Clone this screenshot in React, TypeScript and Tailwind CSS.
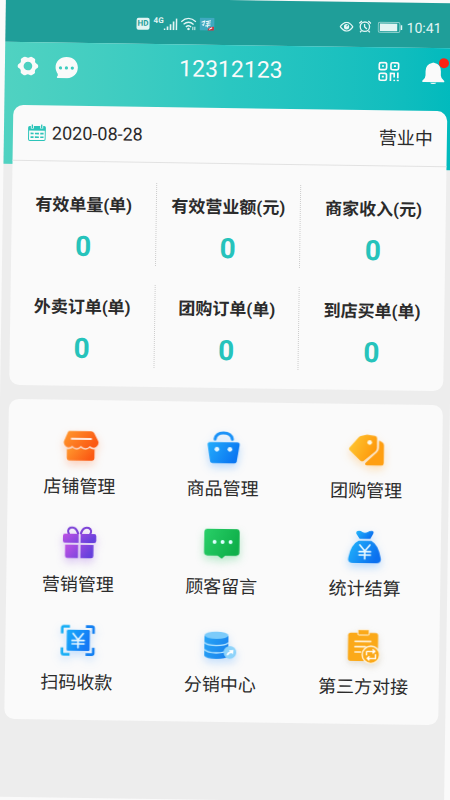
import React from 'react'

const stats = [
  { label: '有效单量(单)', value: 0 },
  { label: '有效营业额(元)', value: 0 },
  { label: '商家收入(元)', value: 0 },
  { label: '外卖订单(单)', value: 0 },
  { label: '团购订单(单)', value: 0 },
  { label: '到店买单(单)', value: 0 },
]

function Gradient({ id, from, to }: { id: string; from: string; to: string }) {
  return (
    <linearGradient id={id} x1="0" y1="0" x2="1" y2="0.4">
      <stop offset="0" stopColor={from} />
      <stop offset="1" stopColor={to} />
    </linearGradient>
  )
}

function ShopIcon() {
  return (
    <svg viewBox="0 0 120 120" className="size-10 drop-shadow-[0_4px_4px_rgba(255,110,40,0.3)]" aria-hidden="true">
      <Gradient id="shop" from="#ff9a2e" to="#fb5a14" />
      <path d="M24 16H92Q98 16 101 21L113 44Q118 54 108 62Q99 69 89 60Q77 74 62 60Q48 74 36 60Q26 69 17 62Q7 54 12 44L22 20Q23 16 28 16Z" fill="url(#shop)" />
      <path d="M20 70Q30 71 37 66Q49 76 62 66Q76 76 88 66Q95 71 103 70V97Q103 104 96 104H27Q20 104 20 97Z" fill="url(#shop)" />
      <path d="M34 39H92" stroke="#ffe9dc" strokeWidth="6" strokeLinecap="round" />
    </svg>
  )
}

function BasketIcon() {
  return (
    <svg viewBox="0 0 120 120" className="size-10 drop-shadow-[0_4px_4px_rgba(30,140,255,0.3)]" aria-hidden="true">
      <Gradient id="basket" from="#24adfb" to="#0b77f2" />
      <path d="M35 34Q38 15 60 15Q84 15 87 34" fill="none" stroke="#1a92f8" strokeWidth="9" strokeLinecap="round" />
      <path d="M20 43H102Q110 43 109 51L101 100Q100 106 94 106H29Q22 106 21 100L13 51Q12 43 20 43Z" fill="url(#basket)" />
      <circle cx="41" cy="64" r="7" fill="#e6f7ff" />
      <circle cx="80" cy="64" r="7" fill="#e6f7ff" />
    </svg>
  )
}

function TagsIcon() {
  return (
    <svg viewBox="0 0 120 120" className="size-10 drop-shadow-[0_4px_4px_rgba(255,160,30,0.3)]" aria-hidden="true">
      <Gradient id="tags" from="#fecb36" to="#fe9a0c" />
      <path d="M98 31L108 36Q113 39 113 45V99Q113 106 106 106H62Q53 104 60 97L92 67Q98 61 98 54Z" fill="#ff9f12" />
      <path d="M9 54L37 22Q40 18 46 17L59 14Q62 13 66 14L86 17Q92 18 92 24V53Q92 59 88 63L53 92Q48 96 43 92L10 61Q7 58 9 54Z" fill="url(#tags)" />
      <circle cx="70" cy="37" r="7" fill="#fff8e4" />
    </svg>
  )
}

function GiftIcon() {
  return (
    <svg viewBox="0 0 120 120" className="size-10 drop-shadow-[0_4px_4px_rgba(140,70,220,0.3)]" aria-hidden="true">
      <Gradient id="gift" from="#bf52e4" to="#6740dc" />
      <path d="M58 31C53 12 42 9 34 12C26 16 25 25 31 31M65 31C70 12 81 9 89 12C98 16 98 25 93 31" fill="none" stroke="#7c42d6" strokeWidth="6" />
      <path d="M18 30H59V57H18Q12 57 12 51V36Q12 30 18 30ZM65 30H106Q112 30 112 36V51Q112 57 106 57H65Z" fill="url(#gift)" />
      <path d="M19 63H58V103H26Q19 103 19 96ZM65 63H104V96Q104 103 97 103H65Z" fill="url(#gift)" />
    </svg>
  )
}

function MessageIcon() {
  return (
    <svg viewBox="0 0 120 120" className="size-10 drop-shadow-[0_4px_4px_rgba(30,190,90,0.3)]" aria-hidden="true">
      <Gradient id="message" from="#29cf68" to="#0fb04a" />
      <path d="M17 9H103Q113 9 113 19V79Q113 89 103 89H70L62 97Q60 99 58 97L48 89H17Q7 89 7 79V19Q7 9 17 9Z" fill="url(#message)" />
      <circle cx="38" cy="48" r="6" fill="#dff" />
      <circle cx="62" cy="48" r="6" fill="#dff" />
      <circle cx="86" cy="48" r="6" fill="#dff" />
    </svg>
  )
}

function MoneyBagIcon() {
  return (
    <svg viewBox="0 0 120 120" className="size-10 drop-shadow-[0_4px_4px_rgba(30,140,255,0.3)]" aria-hidden="true">
      <Gradient id="bag" from="#22b6fb" to="#0b70ef" />
      <path d="M44 32L34 17Q32 8 42 8Q48 8 52 12Q60 17 68 12Q73 8 80 8Q89 9 84 18L76 32Z" fill="url(#bag)" />
      <path d="M41 38H79Q100 48 108 89Q111 105 96 105H24Q8 105 11 89Q19 48 41 38Z" fill="url(#bag)" />
      <path d="M45 51L60 69L75 51M60 69V92M43 71H77M43 81H77" fill="none" stroke="#eafaff" strokeWidth="5" strokeLinecap="round" />
    </svg>
  )
}

function ScanPayIcon() {
  return (
    <svg viewBox="0 0 120 120" className="size-10 drop-shadow-[0_4px_4px_rgba(30,140,255,0.25)]" aria-hidden="true">
      <Gradient id="scan" from="#17acfb" to="#1579f5" />
      <path d="M14 35V19Q14 14 19 14H37M14 77V93Q14 98 19 98H37" fill="none" stroke="#19aef5" strokeWidth="8" />
      <path d="M85 14H103Q108 14 108 19V35M108 77V93Q108 98 103 98H85" fill="none" stroke="#1380f2" strokeWidth="8" />
      <rect x="28" y="24" width="69" height="63" rx="4" fill="url(#scan)" />
      <path d="M47 35L62 54L77 35M62 54V77M44 56H80M44 66H80" fill="none" stroke="#e8f8ff" strokeWidth="5" strokeLinecap="round" />
    </svg>
  )
}

function DistributionIcon() {
  return (
    <svg viewBox="0 0 120 120" className="size-10 drop-shadow-[0_4px_4px_rgba(30,140,255,0.25)]" aria-hidden="true">
      <Gradient id="disks" from="#27a4f5" to="#1c86ee" />
      <path d="M12 36V96Q18 105 48 105Q78 105 84 96V36Z" fill="url(#disks)" />
      <ellipse cx="48" cy="34" rx="36" ry="11" fill="#7ccbfa" />
      <path d="M12 56Q20 65 48 65Q76 65 84 56M12 77Q20 87 48 87Q76 87 84 77" fill="none" stroke="#b9e6ff" strokeWidth="4" />
      <circle cx="89" cy="85" r="19" fill="#8dd3fa" />
      <path d="M79 94Q80 84 89 83L86 79L100 77L98 91L94 87Q87 87 84 94Z" fill="#fff" />
    </svg>
  )
}

function ClipboardIcon() {
  return (
    <svg viewBox="0 0 120 120" className="size-10 drop-shadow-[0_3px_3px_rgba(160,140,100,0.25)]" aria-hidden="true">
      <rect x="14" y="20" width="90" height="85" rx="8" fill="#fba919" />
      <rect x="43" y="11" width="34" height="16" rx="3" fill="#fba919" stroke="#fff3dc" strokeWidth="3" />
      <path d="M35 46H82M35 62H66M35 78H52" stroke="#fff0d2" strokeWidth="5" strokeLinecap="round" />
      <circle cx="83" cy="86" r="26" fill="#fba919" stroke="#fff6e4" strokeWidth="4" />
      <path d="M70 88V76H93M88 70L95 76L88 82M97 84V97H73M79 91L72 97L79 103" fill="none" stroke="#fff" strokeWidth="4" strokeLinejoin="round" />
    </svg>
  )
}

const actions = [
  { label: '店铺管理', icon: <ShopIcon /> },
  { label: '商品管理', icon: <BasketIcon /> },
  { label: '团购管理', icon: <TagsIcon /> },
  { label: '营销管理', icon: <GiftIcon /> },
  { label: '顾客留言', icon: <MessageIcon /> },
  { label: '统计结算', icon: <MoneyBagIcon /> },
  { label: '扫码收款', icon: <ScanPayIcon /> },
  { label: '分销中心', icon: <DistributionIcon /> },
  { label: '第三方对接', icon: <ClipboardIcon /> },
]

function StatusBar() {
  return (
    <div className="flex h-[45px] items-center justify-between bg-[#1f9e99] pt-1 pr-[14px] pl-[131px] text-[#e2f5f4]">
      <div className="flex items-center">
        <span className="flex h-3 w-[13px] items-center justify-center rounded-[2px] bg-[#e2f5f4] text-[8px] font-bold text-[#1f9e99]">HD</span>
        <span className="ml-1 self-start text-[8px] leading-[8px] font-bold">4G</span>
        <svg viewBox="0 0 42 36" className="h-3 w-[14px]" aria-hidden="true">
          <path d="M3 36V31M12 36V25M21 36V18M30 36V10M39 36V1" stroke="currentColor" strokeWidth="5" />
        </svg>
        <svg viewBox="0 0 48 39" className="ml-[3px] h-[13px] w-4" fill="none" stroke="currentColor" strokeWidth="4" aria-hidden="true">
          <path d="M2 13Q24 -7 46 13M9 21Q24 8 39 21M16 29Q24 21 32 29" />
          <path d="M24 30L29 35L24 39L19 35Z" fill="currentColor" stroke="none" />
          <path d="M37 28V38M43 28V38" strokeWidth="3" />
        </svg>
        <svg viewBox="0 0 45 39" className="ml-[3px] h-[13px] w-[15px]" aria-hidden="true">
          <rect width="45" height="39" rx="3" fill="#3fa9c0" />
          <path d="M6 14L15 10L12 23L7 21M18 12L34 9M20 18L33 15M17 25L33 22M26 10L24 29" fill="none" stroke="#e7f7fa" strokeWidth="3" />
          <path d="M24 39Q26 27 43 27V39Z" fill="#c8303a" />
          <path d="M29 35L38 30" stroke="#fff" strokeWidth="3" />
        </svg>
      </div>
      <div className="flex items-center">
        <svg viewBox="0 0 42 30" className="h-[10px] w-[14px]" fill="none" stroke="currentColor" strokeWidth="4" aria-hidden="true">
          <path d="M2 15Q21 -11 40 15Q21 41 2 15Z" />
          <circle cx="21" cy="15" r="8" fill="currentColor" stroke="none" />
          <path d="M21 14L25 9" stroke="#1f9e99" strokeWidth="3" />
        </svg>
        <svg viewBox="0 0 39 39" className="ml-[5px] size-[13px]" fill="none" stroke="currentColor" strokeWidth="4" aria-hidden="true">
          <circle cx="19" cy="20" r="14" />
          <path d="M18 12V20L25 27M2 10L10 3M37 10L29 3M9 32L5 37M30 32L34 37" />
        </svg>
        <svg viewBox="0 0 75 36" className="ml-[6px] h-3 w-[25px]" aria-hidden="true">
          <rect x="2" y="3" width="65" height="30" rx="5" fill="none" stroke="#8fd0cd" strokeWidth="3" />
          <rect x="7" y="7" width="52" height="22" fill="currentColor" />
          <path d="M72 11V25" stroke="currentColor" strokeWidth="5" />
        </svg>
        <span className="ml-1 text-[14px] leading-4">10:41</span>
      </div>
    </div>
  )
}

function NavBar() {
  return (
    <header className="grid h-[50px] grid-cols-[1fr_auto_1fr] items-center pr-[10px] pl-3 text-[#fafafa]">
      <div className="flex items-start gap-4">
        <button type="button" aria-label="设置">
          <svg viewBox="0 0 66 60" className="h-5 w-[22px]" aria-hidden="true">
            <path fillRule="evenodd" fill="currentColor" d="M20 3Q24 1 27 3Q33 7 39 3Q43 1 47 4L53 8Q56 11 54 15Q54 20 59 23Q64 25 64 30Q64 35 59 37Q54 40 54 45Q56 49 53 52L47 56Q43 59 39 57Q33 53 27 57Q23 59 19 56L13 52Q10 49 12 45Q12 40 7 37Q2 35 2 30Q2 25 7 23Q12 20 12 15Q10 11 13 8ZM33 17A13 13 0 1 0 33 43A13 13 0 1 0 33 17Z" />
          </svg>
        </button>
        <button type="button" aria-label="消息">
          <svg viewBox="0 0 70 66" className="h-[22px] w-[23px]" aria-hidden="true">
            <path fill="currentColor" d="M35 1C56 1 70 15 70 33C70 51 56 65 37 65H8Q4 62 9 58L9 53C-8 29 8 1 35 1Z" />
            <circle cx="17" cy="34" r="5" fill="#3fcdc0" />
            <circle cx="35" cy="34" r="5" fill="#3fcdc0" />
            <circle cx="53" cy="34" r="5" fill="#3fcdc0" />
          </svg>
        </button>
      </div>
      <h1 className="text-[23px] leading-7">12312123</h1>
      <div className="flex items-start justify-end gap-[22px]">
        <button type="button" aria-label="二维码">
          <svg viewBox="0 0 66 60" className="h-5 w-[22px]" fill="none" stroke="currentColor" strokeWidth="5" aria-hidden="true">
            <rect x="4" y="4" width="22" height="21" rx="5" />
            <rect x="39" y="4" width="23" height="21" rx="5" />
            <rect x="4" y="36" width="22" height="21" rx="5" />
            <path d="M38 59V36H49V48M60 33V50M47 57H52M57 57H63M12 14H18M48 14H54M12 46H18" />
          </svg>
        </button>
        <button type="button" aria-label="通知" className="relative">
          <svg viewBox="0 0 69 66" className="h-[22px] w-[23px]" fill="currentColor" aria-hidden="true">
            <path d="M30 3Q34 -1 38 3Q57 7 57 28V40Q58 50 66 55Q71 60 64 60H5Q-2 60 3 55Q11 50 11 40V28Q11 7 30 3Z" />
            <path d="M25 62H44Q42 66 34 66Q27 66 25 62Z" />
          </svg>
          <span className="absolute -top-1 -right-1 size-[10px] rounded-full bg-[#fa2314]" />
        </button>
      </div>
    </header>
  )
}

function CalendarIcon() {
  return (
    <svg viewBox="0 0 54 51" className="h-[17px] w-[18px]" fill="none" stroke="#2cc4b9" aria-hidden="true">
      <rect x="2" y="7" width="50" height="42" rx="4" strokeWidth="3" />
      <path d="M2 13H52" strokeWidth="12" />
      <path d="M13 1V13M41 1V13" stroke="#fafafa" strokeWidth="9" />
      <path d="M13 1V12M41 1V12" strokeWidth="4" />
      <path d="M8 28H17M21 28H33M37 28H47M8 39H17M21 39H33M37 39H47" strokeWidth="5" />
    </svg>
  )
}

export default function App() {
  return (
    <div className="min-h-screen overflow-hidden bg-[#fafafa] font-['Roboto','Noto_Sans_CJK_SC',sans-serif]">
      <div className="min-h-screen rotate-[0.85deg] bg-[#ededed] text-[#2b2b2b]">
        <StatusBar />
        <div className="h-[122px] bg-linear-to-r from-[#50d2c1] via-[#2ac7c1] to-[#00babd]">
          <NavBar />
        </div>

        <main className="-mt-[59px] flex flex-col gap-[14px] pr-[7px] pl-[9px]">
          <section className="rounded-[10px] bg-[#fafafa]">
            <div className="flex h-14 items-center justify-between border-b border-[#e2e2e2] pr-[14px] pl-[15px] text-[18px]">
              <div className="flex items-center gap-[6px]">
                <CalendarIcon />
                <time dateTime="2020-08-28">2020-08-28</time>
              </div>
              <span>营业中</span>
            </div>
            <dl className="grid grid-cols-3 gap-y-[19px] pt-5 pb-[19px] text-center">
              {stats.map((s, i) => (
                <div key={s.label} className={i % 3 < 2 ? 'h-[83px] border-r border-dotted border-[#cccccc] pt-[11px]' : 'h-[83px] pt-[11px]'}>
                  <dt className="text-[17px] leading-6 font-bold whitespace-nowrap">{s.label}</dt>
                  <dd className="mt-[14px] text-[28px] leading-8 font-bold text-[#26c3bb]">{s.value}</dd>
                </div>
              ))}
            </dl>
          </section>

          <section className="grid grid-cols-3 gap-y-[25px] rounded-[10px] bg-[#fafafa] pt-[26px] pr-1 pb-[25px]">
            {actions.map((a) => (
              <button key={a.label} type="button" className="flex flex-col items-center gap-[9px] text-[18px] leading-6">
                {a.icon}
                <span>{a.label}</span>
              </button>
            ))}
          </section>
        </main>
      </div>
    </div>
  )
}
